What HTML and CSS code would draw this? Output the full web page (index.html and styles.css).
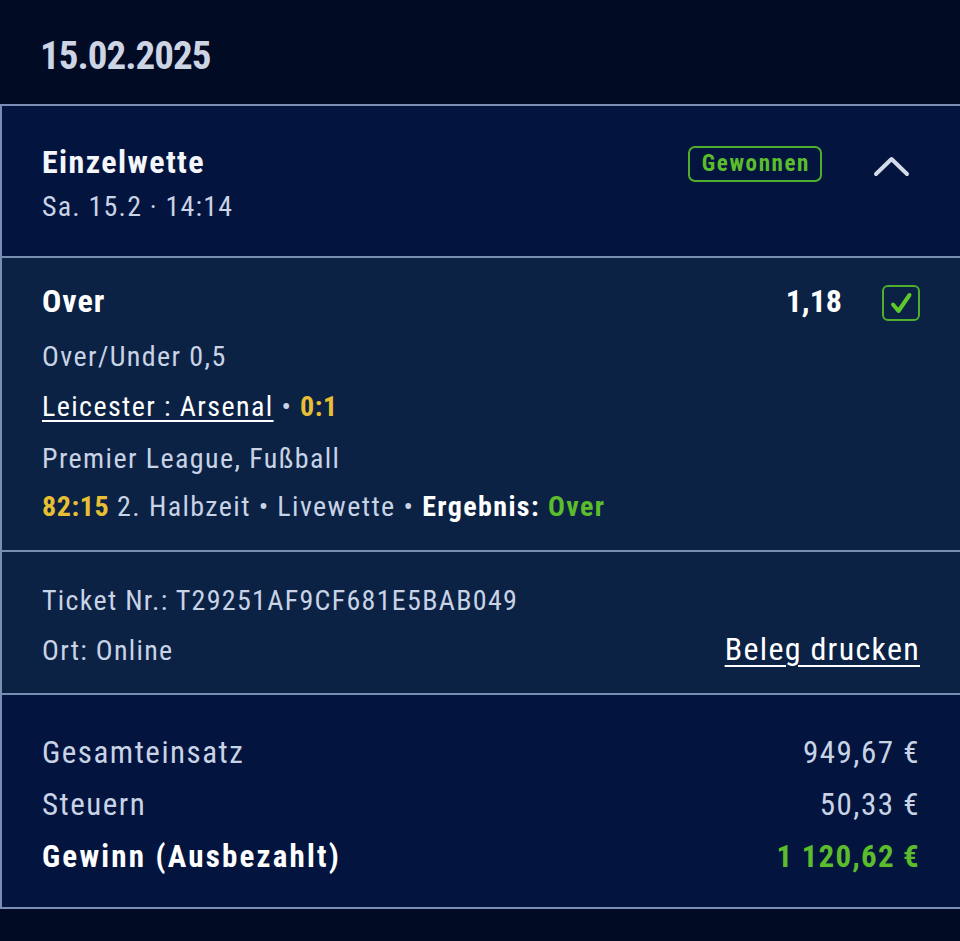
FILE: index.html
```html
<!DOCTYPE html>
<html lang="de">
<head>
    <meta charset="UTF-8">
    <meta name="viewport" content="width=device-width, initial-scale=1.0">
    <title>Wettschein</title>
    <link rel="stylesheet" href="styles.css">
</head>
<body>
    <div class="date-bar">15.02.2025</div>

    <div class="bet-card">
        <div class="bet-head">
            <div>
                <div class="bet-type">Einzelwette</div>
                <div class="bet-time">Sa. 15.2 · 14:14</div>
            </div>
            <div class="head-right">
                <span class="badge-won">Gewonnen</span>
                <svg class="chevron" width="37" height="22" viewBox="0 0 37 22">
                    <polyline points="3,19 18.5,4 34,19" fill="none" stroke="#d3dbe9" stroke-width="4" stroke-linecap="round" stroke-linejoin="round"/>
                </svg>
            </div>
        </div>

        <div class="selection">
            <div class="sel-top">
                <div class="sel-name">Over</div>
                <div class="sel-odds">
                    <span>1,18</span>
                    <span class="check-box">
                        <svg width="24" height="24" viewBox="0 0 24 24">
                            <path d="M4 13.5 L9.5 20 L20.5 4" fill="none" stroke="#5ec92b" stroke-width="4" stroke-linecap="round" stroke-linejoin="round"/>
                        </svg>
                    </span>
                </div>
            </div>
            <div class="line">Over/Under 0,5</div>
            <div class="line"><a class="match" href="#">Leicester : Arsenal</a> • <span class="score">0:1</span></div>
            <div class="line league">Premier League, Fußball</div>
            <div class="line"><span class="score">82:15</span> 2. Halbzeit • Livewette • <b class="white">Ergebnis:</b> <b class="green">Over</b></div>
        </div>

        <div class="ticket">
            <div class="line">Ticket Nr.: T29251AF9CF681E5BAB049</div>
            <div class="ticket-row">
                <span class="line">Ort: Online</span>
                <a class="print" href="#">Beleg drucken</a>
            </div>
        </div>

        <div class="totals">
            <div class="total-row"><span>Gesamteinsatz</span><span>949,67 €</span></div>
            <div class="total-row"><span>Steuern</span><span>50,33 €</span></div>
            <div class="total-row win"><span>Gewinn (Ausbezahlt)</span><span class="green">1 120,62 €</span></div>
        </div>
    </div>
</body>
</html>
```
FILE: styles.css
```css
body {
    margin: 0;
    background-color: #020b24;
    font-family: Roboto, "Liberation Sans", sans-serif;
    font-stretch: 80%;
    color: #c9d3e6;
}
.date-bar {
    height: 104px;
    box-sizing: border-box;
    padding: 34px 40px 0;
    font-size: 39px;
    font-weight: 700;
    font-stretch: 75%;
    letter-spacing: -1px;
    line-height: 44px;
    color: #cdd5e5;
}
.bet-card {
    border: 2px solid #7a8db3;
    border-right: none;
    background-color: #03153f;
}
.bet-head {
    display: flex;
    justify-content: space-between;
    padding: 36px 38px 28px 40px;
    height: 86px;
}
.bet-type {
    font-size: 32px;
    font-weight: 700;
    letter-spacing: 1.4px;
    color: #f4f6fa;
    line-height: 40px;
}
.bet-time {
    font-size: 28px;
    letter-spacing: 1.2px;
    line-height: 40px;
    margin-top: 5px;
}
.head-right {
    display: flex;
    align-items: flex-start;
    gap: 51px;
    padding-top: 4px;
}
.badge-won {
    border: 2px solid #4fae2c;
    border-radius: 7px;
    color: #5bbd2b;
    font-size: 23px;
    font-weight: 700;
    letter-spacing: 1.6px;
    line-height: 32px;
    padding: 0 10px 0 12px;
}
.chevron {
    margin-top: 9px;
    margin-right: 12px;
}
.selection, .ticket {
    background-color: #0b2245;
    border-top: 2px solid #7a8db3;
}
.selection {
    padding: 23px 40px 18px;
}
.sel-top {
    display: flex;
    justify-content: space-between;
    align-items: center;
    margin-bottom: 11px;
}
.sel-name, .sel-odds {
    font-size: 32px;
    font-weight: 700;
    color: #ffffff;
}
.sel-name {
    letter-spacing: 1px;
}
.sel-odds {
    display: flex;
    align-items: center;
    gap: 40px;
}
.check-box {
    width: 34px;
    height: 32px;
    margin-top: 4px;
    border: 2px solid #4fae2c;
    border-radius: 6px;
    display: flex;
    align-items: center;
    justify-content: center;
}
.line {
    font-size: 28px;
    line-height: 50px;
    letter-spacing: 1.4px;
}
.league {
    margin-top: 4px;
    line-height: 46px;
}
.match {
    color: #ffffff;
    text-decoration: underline;
    text-underline-offset: 4px;
    text-decoration-thickness: 2px;
}
.score {
    color: #e8bf33;
    font-weight: 700;
    letter-spacing: 0.6px;
}
.white {
    color: #ffffff;
}
.green {
    color: #5bbd2b;
    font-weight: 700;
}
.ticket {
    padding: 24px 40px 17px;
    border-bottom: 2px solid #7a8db3;
}
.ticket .line:first-child {
    letter-spacing: 1.3px;
}
.ticket-row {
    display: flex;
    justify-content: space-between;
    align-items: baseline;
}
.print {
    color: #ffffff;
    font-size: 32px;
    letter-spacing: 1.3px;
    text-decoration: underline;
    text-underline-offset: 5px;
    text-decoration-thickness: 2px;
}
.totals {
    padding: 32px 40px 24px;
}
.total-row {
    display: flex;
    justify-content: space-between;
    font-size: 31px;
    line-height: 52px;
    letter-spacing: 1.5px;
}
.total-row.win {
    color: #ffffff;
    font-weight: 700;
    letter-spacing: 2.2px;
}
.total-row.win .green {
    letter-spacing: 1.2px;
}
```
